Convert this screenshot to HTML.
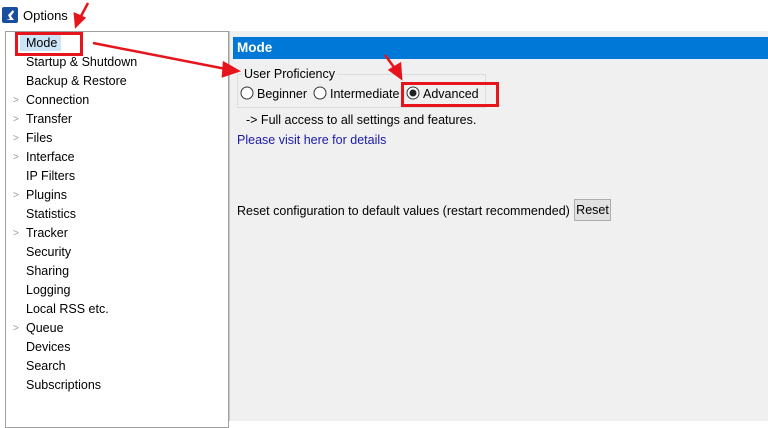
<!DOCTYPE html><html><head><style>
body{margin:0;width:768px;height:421px;overflow:hidden;background:#fff;font-family:"Liberation Sans",sans-serif;font-size:12.5px;color:#000;position:relative}
.a{position:absolute;white-space:nowrap}
#left{position:absolute;left:5px;top:31px;width:222px;height:395px;border:1px solid #a0a0a0;background:#fff}
#right{position:absolute;left:229px;top:31px;width:539px;height:390px;background:#f0f0f0;border-left:1px solid #c8c8c8}
.it{position:absolute;left:20px}
.ch{position:absolute;left:7px;color:#999;font-size:10px}
</style></head><body>
<svg class="a" style="left:2px;top:7px" width="16" height="16"><rect width="16" height="16" rx="2" fill="#1a4fa0"/><path d="M11 3 L6 8 L8 12 L4 13 L12 13 L9 9 L12 5Z" fill="#fff"/></svg>
<div class="a" style="left:23px;top:8px;font-size:13px">Options</div>
<div id="left">
<div class="a" style="left:14px;top:3px;width:41px;height:16px;background:#cce4f7"></div>
<div class="it" style="top:4px">Mode</div>
<div class="it" style="top:23px">Startup &amp; Shutdown</div>
<div class="it" style="top:42px">Backup &amp; Restore</div>
<div class="ch" style="top:63px">&gt;</div><div class="it" style="top:61px">Connection</div>
<div class="ch" style="top:82px">&gt;</div><div class="it" style="top:80px">Transfer</div>
<div class="ch" style="top:101px">&gt;</div><div class="it" style="top:99px">Files</div>
<div class="ch" style="top:120px">&gt;</div><div class="it" style="top:118px">Interface</div>
<div class="it" style="top:137px">IP Filters</div>
<div class="ch" style="top:158px">&gt;</div><div class="it" style="top:156px">Plugins</div>
<div class="it" style="top:175px">Statistics</div>
<div class="ch" style="top:196px">&gt;</div><div class="it" style="top:194px">Tracker</div>
<div class="it" style="top:213px">Security</div>
<div class="it" style="top:232px">Sharing</div>
<div class="it" style="top:251px">Logging</div>
<div class="it" style="top:270px">Local RSS etc.</div>
<div class="ch" style="top:291px">&gt;</div><div class="it" style="top:289px">Queue</div>
<div class="it" style="top:308px">Devices</div>
<div class="it" style="top:327px">Search</div>
<div class="it" style="top:346px">Subscriptions</div>
</div>
<div id="right"></div>
<div class="a" style="left:233px;top:37px;width:535px;height:22px;background:#0078d7;color:#fff;font-weight:bold;font-size:13.5px;line-height:22px;text-indent:4px">Mode</div>
<div class="a" style="left:237px;top:74px;width:247px;height:32px;border:1px solid #dcdcdc"></div>
<div class="a" style="left:242px;top:67px;background:#f0f0f0;padding:0 2px">User Proficiency</div>
<svg class="a" style="left:240px;top:86px" width="14" height="14"><circle cx="7" cy="7" r="6" fill="#fff" stroke="#333"/></svg>
<div class="a" style="left:257px;top:87px">Beginner</div>
<svg class="a" style="left:313px;top:86px" width="14" height="14"><circle cx="7" cy="7" r="6" fill="#fff" stroke="#333"/></svg>
<div class="a" style="left:330px;top:87px">Intermediate</div>
<svg class="a" style="left:406px;top:86px" width="14" height="14"><circle cx="7" cy="7" r="6" fill="#fff" stroke="#333"/><circle cx="7" cy="7" r="3.5" fill="#222"/></svg>
<div class="a" style="left:423px;top:87px">Advanced</div>
<div class="a" style="left:246px;top:113px">-&gt; Full access to all settings and features.</div>
<div class="a" style="left:237px;top:133px;color:#1a1aa8">Please visit here for details</div>
<div class="a" style="left:237px;top:204px">Reset configuration to default values (restart recommended)</div>
<div class="a" style="left:574px;top:199px;width:37px;height:22px;background:#e1e1e1;border:1px solid #adadad;box-sizing:border-box;text-align:center;line-height:20px">Reset</div>
<div class="a" style="left:15px;top:32px;width:62px;height:18px;border:3px solid #e8141b"></div>
<div class="a" style="left:401px;top:82px;width:92px;height:19px;border:3px solid #e8141b"></div>
<svg class="a" style="left:0;top:0" width="768" height="421">
<g stroke="#e8141b" stroke-width="2.5" fill="#e8141b">
<line x1="88" y1="3" x2="80" y2="18"/><path d="M76 26 L75 14 L84 18Z"/>
<line x1="93" y1="43" x2="226" y2="69"/><path d="M238 71 L224 63 L223 76Z"/>
<line x1="385" y1="55" x2="396" y2="70"/><path d="M401 78 L390 70 L400 64Z"/>
</g></svg>
</body></html>
